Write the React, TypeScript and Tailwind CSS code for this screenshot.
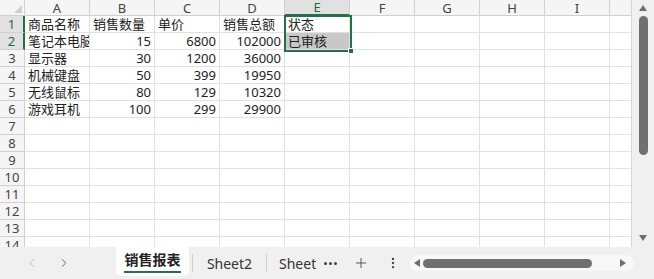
import React from 'react';
import { ChevronLeft, ChevronRight, Plus, EllipsisVertical } from 'lucide-react';

const cols = ['A', 'B', 'C', 'D', 'E', 'F', 'G', 'H', 'I'];

type Cell = { v: string; num?: boolean };

const data: Cell[][] = [
  [{ v: '商品名称' }, { v: '销售数量' }, { v: '单价' }, { v: '销售总额' }, { v: '状态' }],
  [{ v: '笔记本电脑' }, { v: '15', num: true }, { v: '6800', num: true }, { v: '102000', num: true }, { v: '已审核' }],
  [{ v: '显示器' }, { v: '30', num: true }, { v: '1200', num: true }, { v: '36000', num: true }],
  [{ v: '机械键盘' }, { v: '50', num: true }, { v: '399', num: true }, { v: '19950', num: true }],
  [{ v: '无线鼠标' }, { v: '80', num: true }, { v: '129', num: true }, { v: '10320', num: true }],
  [{ v: '游戏耳机' }, { v: '100', num: true }, { v: '299', num: true }, { v: '29900', num: true }],
];

const rowCount = 14;

const font = { fontFamily: '"Noto Sans", "Noto Sans CJK SC", sans-serif' };

const App: React.FC = () => {
  return (
    <div className="w-[654px] h-[279px] bg-[#f0f0f0] flex flex-col overflow-hidden text-[#222]" style={font}>
      <div className="flex h-[247px]">
        {/* Grid */}
        <div className="relative w-[632px] h-[247px] bg-white overflow-hidden border-r border-[#d6d6d6]">
          {/* header row */}
          <div className="flex h-[16px]">
            <div className="relative w-[25px] shrink-0 bg-[#f5f5f5] border-r border-b border-[#d0d0d0]">
              <div className="absolute right-[2px] bottom-[2px] w-0 h-0 border-l-[8px] border-l-transparent border-b-[8px] border-b-[#cfcfcf]" />
            </div>
            {cols.map(c => (
              <div
                key={c}
                className={
                  c === 'E'
                    ? 'w-[65px] shrink-0 bg-[#e1e1e1] border-r border-[#d0d0d0] border-b-2 border-b-[#217346] text-[#1d6b40] text-[13px] leading-[14px] flex items-center justify-center'
                    : 'w-[65px] shrink-0 bg-[#f5f5f5] border-r border-b border-[#d0d0d0] text-[#444] text-[13px] leading-[14px] flex items-center justify-center'
                }
              >
                {c}
              </div>
            ))}
            <div className="flex-1 bg-[#f5f5f5] border-b border-[#d0d0d0]" />
          </div>

          {/* body rows */}
          {Array.from({ length: rowCount }).map((_, r) => {
            const sel = r < 2;
            const row = data[r] || [];
            return (
              <div key={r} className="flex h-[17px]">
                <div
                  className={
                    sel
                      ? 'w-[25px] shrink-0 bg-[#e1e1e1] border-r-2 border-r-[#217346] border-b border-b-[#d0d0d0] text-[#1d6b40] text-[13px] leading-[16px] text-center'
                      : 'w-[25px] shrink-0 bg-[#f5f5f5] border-r border-b border-[#d0d0d0] text-[#444] text-[13px] leading-[16px] text-center'
                  }
                >
                  {r + 1}
                </div>
                {cols.map((c, ci) => {
                  const cell = row[ci];
                  const shaded = r === 1 && c === 'E';
                  return (
                    <div
                      key={c}
                      className={
                        (shaded ? 'bg-[#c8c8c8] ' : '') +
                        'w-[65px] shrink-0 border-r border-b border-[#e1e1e1] overflow-hidden whitespace-nowrap text-[13px] leading-[16px] ' +
                        (cell?.num ? 'text-right pr-[3px]' : 'pl-[3px]')
                      }
                    >
                      {cell?.v}
                    </div>
                  );
                })}
                <div className="flex-1 border-b border-[#e1e1e1]" />
              </div>
            );
          })}

          {/* selection E1:E2 */}
          <div className="absolute left-[284px] top-[15px] w-[68px] h-[37px] border-2 border-[#217346]" />
          <div className="absolute left-[348px] top-[48px] w-[6px] h-[6px] bg-[#217346] border border-white" />
        </div>

        {/* Vertical scrollbar */}
        <div className="w-[22px] flex flex-col items-center bg-[#f0f0f0]">
          <div className="mt-[5px] w-0 h-0 border-l-[4px] border-r-[4px] border-b-[6px] border-l-transparent border-r-transparent border-b-[#6e6e6e]" />
          <div className="mt-[5px] w-[9px] h-[139px] rounded-full bg-[#707070]" />
          <div className="flex-1" />
          <div className="mb-[6px] w-0 h-0 border-l-[4px] border-r-[4px] border-t-[6px] border-l-transparent border-r-transparent border-t-[#6e6e6e]" />
        </div>
      </div>

      {/* Tab bar */}
      <div className="flex items-center h-[32px] bg-[#f0f0f0]">
        <div className="w-[116px] flex items-center pl-[25px] gap-[18px] shrink-0">
          <ChevronLeft className="w-[14px] h-[14px] text-[#b5b5b5]" strokeWidth={1.5} />
          <ChevronRight className="w-[14px] h-[14px] text-[#555]" strokeWidth={1.5} />
        </div>
        <div className="self-start h-[29px] w-[73px] bg-white rounded-b-[5px] flex flex-col items-center justify-center shrink-0">
          <span className="text-[14px] font-bold leading-[18px] text-[#222]">销售报表</span>
          <div className="mt-[2px] w-[57px] h-[2px] bg-[#217346]" />
        </div>
        <div className="ml-[3px] w-px h-[18px] bg-[#cfcfcf]" />
        <div className="w-[73px] text-center text-[14px] text-[#333] shrink-0">Sheet2</div>
        <div className="w-px h-[18px] bg-[#cfcfcf]" />
        <div className="ml-[12px] w-[37px] overflow-hidden whitespace-nowrap text-[14px] text-[#333]">Sheet3</div>
        <div className="ml-[8px] flex gap-[2px]">
          <span className="w-[3px] h-[3px] rounded-full bg-[#444]" />
          <span className="w-[3px] h-[3px] rounded-full bg-[#444]" />
          <span className="w-[3px] h-[3px] rounded-full bg-[#444]" />
        </div>
        <Plus className="ml-[16px] w-[16px] h-[16px] text-[#444]" strokeWidth={1.3} />
        <EllipsisVertical className="ml-[17px] w-[14px] h-[14px] text-[#444]" strokeWidth={2} />
        <div className="ml-[10px] w-[224px] h-[16px] rounded-full bg-[#f8f8f8] flex items-center px-[4px]">
          <div className="w-0 h-0 border-t-[4px] border-b-[4px] border-r-[6px] border-t-transparent border-b-transparent border-r-[#6e6e6e]" />
          <div className="ml-[3px] w-[169px] h-[9px] rounded-full bg-[#707070]" />
          <div className="flex-1" />
          <div className="mr-[4px] w-0 h-0 border-t-[4px] border-b-[4px] border-l-[6px] border-t-transparent border-b-transparent border-l-[#6e6e6e]" />
        </div>
      </div>
    </div>
  );
};

export default App;
